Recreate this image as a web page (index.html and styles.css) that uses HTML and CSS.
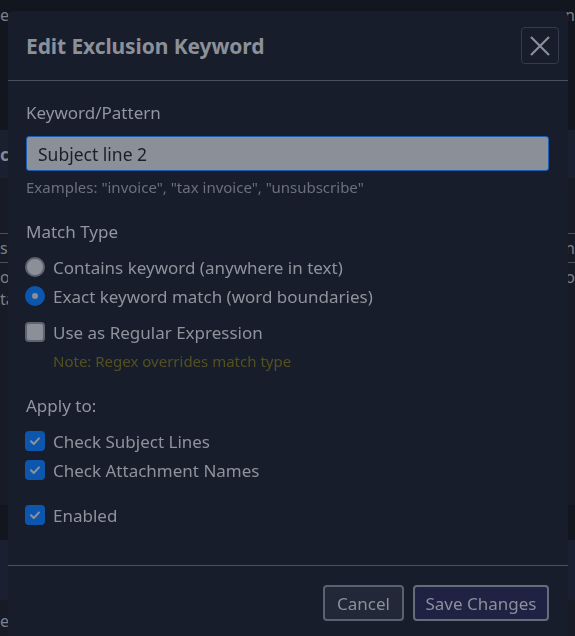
FILE: index.html
```html
<!DOCTYPE html>
<html lang="en">
<head>
<meta charset="utf-8">
<title>Edit Exclusion Keyword</title>
<link rel="stylesheet" href="styles.css">
</head>
<body>
<div class="page">
  <div class="bg-top">
    <div class="bg-row"><span>e</span><span>n</span></div>
  </div>
  <div class="bg-band"><span class="bg-bold">c</span></div>
  <div class="bg-list">
    <div class="bg-line"></div>
    <div class="bg-row"><span>s</span><span>n</span></div>
    <div class="bg-line"></div>
    <div class="bg-row"><span>or</span><span>o</span></div>
    <div class="bg-row"><span>ta</span><span></span></div>
  </div>
  <div class="bg-dark"></div>
  <div class="bg-light"></div>
  <div class="bg-row bg-last"><span>e</span><span></span></div>
</div>

<div class="modal">
  <div class="modal-header">
    <h2 class="modal-title">Edit Exclusion Keyword</h2>
    <button class="btn-close" aria-label="Close">
      <svg width="20" height="20" viewBox="0 0 20 20"><path d="M1 1 L19 19 M19 1 L1 19" stroke="#8a8e97" stroke-width="2.2" fill="none"/></svg>
    </button>
  </div>
  <div class="modal-body">
    <label class="field-label">Keyword/Pattern</label>
    <input class="text-input" type="text" value="Subject line 2">
    <div class="help">Examples: "invoice", "tax invoice", "unsubscribe"</div>

    <div class="field-label section">Match Type</div>
    <div class="options">
      <div class="opt"><span class="radio"></span><span>Contains keyword (anywhere in text)</span></div>
      <div class="opt"><span class="radio checked"></span><span>Exact keyword match (word boundaries)</span></div>
    </div>
    <div class="opt regex"><span class="check"></span><span>Use as Regular Expression</span></div>
    <div class="note">Note: Regex overrides match type</div>

    <div class="field-label section">Apply to:</div>
    <div class="options">
      <div class="opt"><span class="check checked"><svg width="12" height="12" viewBox="0 0 12 12"><path d="M2 6.2 L4.8 9 L10 3.4" stroke="#8d919a" stroke-width="2" fill="none" stroke-linecap="round" stroke-linejoin="round"/></svg></span><span>Check Subject Lines</span></div>
      <div class="opt"><span class="check checked"><svg width="12" height="12" viewBox="0 0 12 12"><path d="M2 6.2 L4.8 9 L10 3.4" stroke="#8d919a" stroke-width="2" fill="none" stroke-linecap="round" stroke-linejoin="round"/></svg></span><span>Check Attachment Names</span></div>
    </div>
    <div class="opt enabled"><span class="check checked"><svg width="12" height="12" viewBox="0 0 12 12"><path d="M2 6.2 L4.8 9 L10 3.4" stroke="#8d919a" stroke-width="2" fill="none" stroke-linecap="round" stroke-linejoin="round"/></svg></span><span>Enabled</span></div>
  </div>
  <div class="modal-footer">
    <button class="btn btn-cancel">Cancel</button>
    <button class="btn btn-save">Save Changes</button>
  </div>
</div>
</body>
</html>
```

FILE: styles.css
```css
* { box-sizing: border-box; }
html, body { margin: 0; padding: 0; }
body {
  background: #161b26;
  font-family: "Noto Sans", "Open Sans", sans-serif;
  color: #8e939c;
  width: 575px;
  height: 636px;
  overflow: hidden;
}

/* dimmed page behind */
.page { display: flex; flex-direction: column; }
.bg-top { height: 130px; background: #12161e; padding-top: 4px; }
.bg-row { display: flex; justify-content: space-between; font-size: 16px; line-height: 22px; color: #7b808b; }
.bg-band { height: 48px; background: #1a2030; display: flex; align-items: center; }
.bg-bold { font-weight: 700; font-size: 17px; color: #858a95; }
.bg-list { display: flex; flex-direction: column; padding-top: 52px; height: 327px; }
.bg-line { height: 1px; background: #4b5060; margin: 3px 0; }
.bg-dark { height: 35px; background: #12161e; }
.bg-light { height: 60px; background: #1a2030; }
.bg-last { margin-top: 10px; }

/* modal */
.modal {
  position: fixed;
  left: 8px;
  top: 11px;
  width: 560px;
  height: 640px;
  background: #171d2b;
  border-radius: 6px;
  display: flex;
  flex-direction: column;
}
.modal-header {
  height: 70px;
  display: flex;
  align-items: center;
  justify-content: space-between;
  padding: 0 9px 0 18px;
  border-bottom: 1px solid #4b5163;
}
.modal-title {
  margin: 0;
  font-size: 21px;
  font-weight: 700;
  color: #8b9099;
  letter-spacing: -0.1px;
}
.btn-close {
  width: 38px;
  height: 37px;
  border: 1px solid #353b4a;
  border-radius: 4px;
  background: transparent;
  display: flex;
  align-items: center;
  justify-content: center;
  padding: 0;
}
.modal-body {
  padding: 20px 18px 38px 18px;
  display: flex;
  flex-direction: column;
}
.field-label {
  font-size: 17px;
  line-height: 24px;
  color: #9196a0;
  margin-bottom: 11px;
}
.field-label.section { margin-top: 23px; }
.text-input {
  height: 35px;
  width: 523px;
  background: #8b8f98;
  border: 1px solid #1c5cb2;
  border-radius: 3px;
  padding: 0 11px;
  font-family: inherit;
  font-size: 17.5px;
  color: #1b1f27;
  outline: none;
}
.help {
  margin-top: 6px;
  font-size: 15px;
  line-height: 20px;
  color: #6b707b;
}
.options { display: flex; flex-direction: column; gap: 5px; }
.opt {
  display: flex;
  align-items: center;
  gap: 8px;
  height: 24px;
  font-size: 17px;
  color: #8e939c;
  margin-left: -1px;
}
.opt.regex { margin-top: 12px; }
.opt.enabled { margin-top: 21px; }
.radio {
  width: 20px;
  height: 20px;
  border-radius: 50%;
  background: #8b8f98;
  border: 2px solid #5e6370;
  display: flex;
  align-items: center;
  justify-content: center;
}
.radio.checked { background: #0d56ad; border-color: #0d56ad; }
.radio.checked::after {
  content: "";
  width: 6px;
  height: 6px;
  border-radius: 50%;
  background: #8b8f98;
}
.check {
  width: 20px;
  height: 20px;
  border-radius: 4px;
  background: #8b8f98;
  border: 2px solid #5e6370;
  display: flex;
  align-items: center;
  justify-content: center;
}
.check.checked { background: #0d56ad; border-color: #0d56ad; }
.note {
  margin-top: 7px;
  margin-left: 27px;
  font-size: 15px;
  line-height: 20px;
  color: #545020;
}
.modal-footer {
  border-top: 1px solid #4b5163;
  display: flex;
  justify-content: flex-end;
  gap: 9px;
  padding: 19px 19px 0 0;
}
.btn {
  height: 36px;
  border-radius: 4px;
  font-family: inherit;
  font-size: 17px;
  color: #8b9099;
  padding: 0 10px;
}
.btn-cancel { width: 81px; background: #222837; border: 2px solid #5b6170; }
.btn-save { width: 136px; background: #1f2243; border: 2px solid #676c7b; }
```
